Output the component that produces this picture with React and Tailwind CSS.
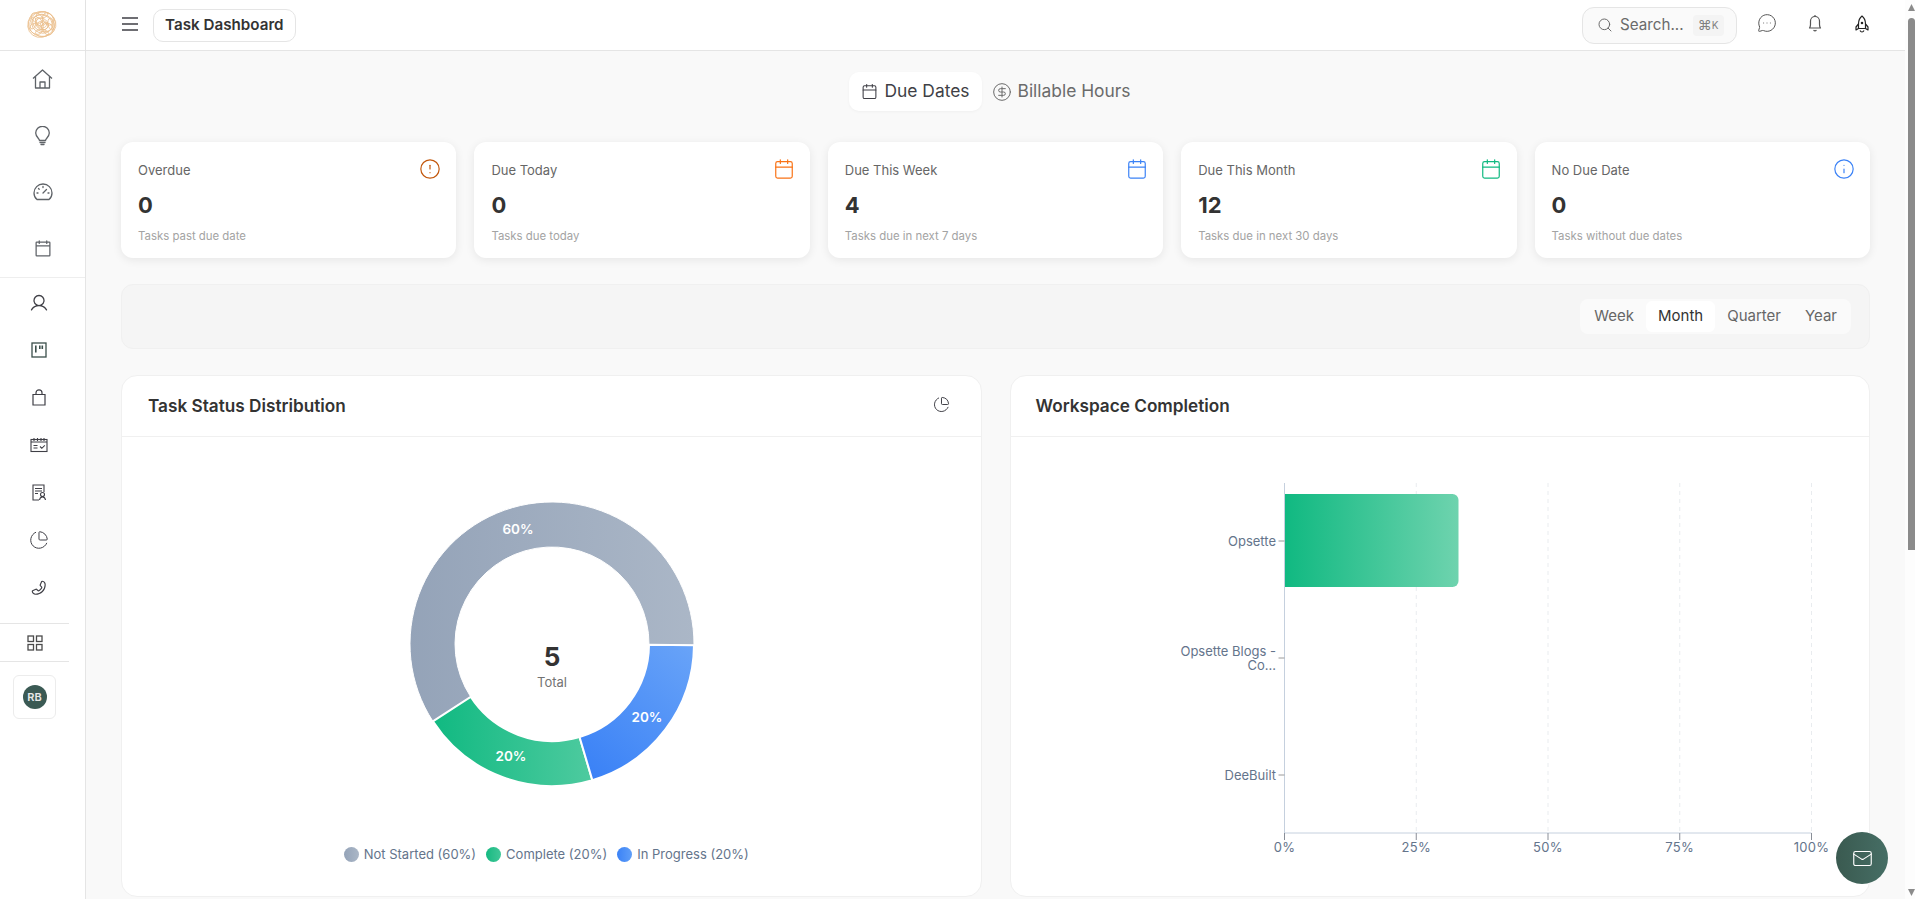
import { CircleAlert, Info, Calendar, CircleDollarSign, Search, MessageCircleMore, Mail, ChartPie } from "lucide-react";
import { PiCalendarBlank, PiUser, PiPhone } from "react-icons/pi";

const stats = [
  { title: "Overdue", value: "0", note: "Tasks past due date", Icon: CircleAlert, color: "text-[#c2570c]" },
  { title: "Due Today", value: "0", note: "Tasks due today", Icon: Calendar, color: "text-[#f97316]" },
  { title: "Due This Week", value: "4", note: "Tasks due in next 7 days", Icon: Calendar, color: "text-[#3b82f6]" },
  { title: "Due This Month", value: "12", note: "Tasks due in next 30 days", Icon: Calendar, color: "text-[#10b981]" },
  { title: "No Due Date", value: "0", note: "Tasks without due dates", Icon: Info, color: "text-[#3b82f6]" },
];

function Logo() {
  const rings = [
    [15, 15, 14, 12.5, 10], [14.5, 15.5, 12.5, 14, 60], [15, 15, 10.5, 9, 20], [16, 14, 8.5, 10.5, 110],
    [15, 15, 6.5, 5.5, 40], [15, 15.5, 3.5, 4.5, 80], [10, 9, 6.5, 4.5, 35], [21, 10, 5, 6.5, 150],
    [21, 20, 6, 5, 70], [9, 20, 5, 6.5, 120], [15, 24, 6.5, 3.5, 5], [15, 6, 6, 3, 170], [6, 14, 3, 6, 10],
    [24, 15, 3, 6, 170], [15, 15, 1.5, 2, 0], [12, 13, 4.5, 3, 60], [18, 17, 4, 3, 130],
  ];
  return (
    <svg width="30" height="30" viewBox="0 0 30 30" fill="none" stroke="#ebbf8c" strokeWidth="0.8" className="-mt-[2px] -ml-[1px]">
      {rings.map(([cx, cy, rx, ry, rot], i) => (
        <ellipse key={i} cx={cx} cy={cy} rx={rx} ry={ry} transform={`rotate(${rot} ${cx} ${cy})`} />
      ))}
    </svg>
  );
}

function Home() {
  return (
    <svg width="21" height="20" viewBox="0 0 21 20" fill="none" stroke="currentColor" strokeWidth="1.3" strokeLinejoin="round">
      <path d="M1 9.5L10.5 1l9.5 8.5" />
      <path d="M3.5 7.5V19h14V7.5" />
      <path d="M8 19v-6h5v6" />
    </svg>
  );
}

function Bulb() {
  return (
    <svg width="17" height="20" viewBox="0 0 17 20" fill="none" stroke="currentColor" strokeWidth="1.3" strokeLinecap="round">
      <path d="M5.5 14.5c0-2-3.8-3.6-3.8-7.4a6.8 6.8 0 0 1 13.6 0c0 3.8-3.8 5.4-3.8 7.4z" />
      <path d="M6 16.5h5M7 18.5h3" />
    </svg>
  );
}

function Gauge() {
  return (
    <svg width="20" height="18" viewBox="0 0 20 18" fill="none" stroke="currentColor" strokeWidth="1.3" strokeLinecap="round">
      <path d="M4 16.5C2 15 1 12.5 1 10a9 9 0 0 1 18 0c0 2.5-1 5-3 6.5z" />
      <path d="M10 10l3.5-3.5M10 3.5v1M4 10h1M15 10h1M5.5 5.5l.7.7" />
    </svg>
  );
}

function Kanban() {
  return (
    <svg width="16" height="16" viewBox="0 0 16 16" fill="none" stroke="#3b4f4b" strokeWidth="1.3">
      <rect x="1" y="1" width="14" height="14" />
      <path d="M4.8 3.5v7M8.8 3.5v3.5M11.3 3.5v3.5" strokeWidth="1.6" />
    </svg>
  );
}

function Bag() {
  return (
    <svg width="16" height="17" viewBox="0 0 16 17" fill="none" stroke="#3f3f46" strokeWidth="1.2">
      <path d="M2 5.5h12v10.5H2z" />
      <path d="M5 5.5V3.8a3 3 0 0 1 6 0v1.7" />
    </svg>
  );
}

function CalendarTasks() {
  return (
    <svg width="18" height="16" viewBox="0 0 18 16" fill="none" stroke="#3f3f46" strokeWidth="1.1">
      <rect x="1" y="2.5" width="16" height="12" />
      <path d="M1 5h16M4 1v3M7.5 1v3M11 1v3M14 1v3M3.5 8.5h4M3.5 11h4M10 9.5l1.8 1.8 3-3" />
    </svg>
  );
}

function Certificate() {
  return (
    <svg width="16" height="17" viewBox="0 0 16 17" fill="none" stroke="#3f3f46" strokeWidth="1.1">
      <path d="M8 16H2V1h11v7" />
      <path d="M4 4.5h7M4 7h7M4 9.5h3" />
      <circle cx="11.5" cy="10.5" r="2" />
      <path d="M8.5 16c.3-2 1.5-3 3-3s2.7 1 3 3" />
    </svg>
  );
}

function Squares() {
  return (
    <svg width="16" height="16" viewBox="0 0 16 16" fill="none" stroke="#4b4b4b" strokeWidth="1.3">
      <rect x="1" y="1" width="5.5" height="5.5" />
      <rect x="9.5" y="1" width="5.5" height="5.5" />
      <rect x="1" y="9.5" width="5.5" height="5.5" />
      <rect x="9.5" y="9.5" width="5.5" height="5.5" />
    </svg>
  );
}

function Bell() {
  return (
    <svg width="20" height="20" viewBox="0 0 20 20" fill="none" stroke="currentColor" strokeWidth="1.2" strokeLinejoin="round">
      <path d="M4.5 15c.7-1 1-2 1-3.5V8a4.5 4.5 0 0 1 9 0v3.5c0 1.5.3 2.5 1 3.5z" />
      <path d="M8.5 17.3c.7.6 2.3.6 3 0M10 2v1.5" />
    </svg>
  );
}

function Rocket() {
  return (
    <svg width="20" height="20" viewBox="0 0 20 20" fill="none" stroke="currentColor" strokeWidth="1.2" strokeLinejoin="round">
      <path d="M10 2C7.5 4 6.5 7 6.5 10v4.5h7V10c0-3-1-6-3.5-8z" />
      <path d="M6.5 10l-2.5 3v3l2.5-1.5M13.5 10l2.5 3v3l-2.5-1.5" />
      <path d="M8 16.5c.5 1 1.2 1.5 2 1.5s1.5-.5 2-1.5" />
      <circle cx="10" cy="9" r="0.7" fill="currentColor" />
    </svg>
  );
}

function Sidebar() {
  const top = [
    <Home key="h" />,
    <Bulb key="l" />,
    <Gauge key="g" />,
    <PiCalendarBlank key="c" size={20} />,
  ];
  const mid = [
    <PiUser key="u" size={20} />,
    <Kanban key="k" />,
    <Bag key="b" />,
    <CalendarTasks key="ct" />,
    <Certificate key="ce" />,
    <ChartPie key="p" size={20} strokeWidth={1.2} />,
    <PiPhone key="ph" size={18} className="-scale-x-100" />,
  ];
  return (
    <aside className="w-[86px] shrink-0 flex flex-col border-r border-[#e5e5e5] bg-white text-[#5f6368]">
      <div className="h-[51px] shrink-0 flex items-center justify-center border-b border-[#e5e5e5]">
        <Logo />
      </div>
      <div className="flex flex-col border-b border-[#eeeeee] h-[227px] shrink-0">
        {top.map((icon, i) => (
          <div key={i} className="h-[56.5px] shrink-0 flex items-center justify-center">{icon}</div>
        ))}
      </div>
      <div className="w-[78px] flex flex-col shrink-0 h-[345px] pt-[1px] text-[#3f3f46]">
        {mid.map((icon, i) => (
          <div key={i} className="h-[47.5px] shrink-0 flex items-center justify-center">{icon}</div>
        ))}
      </div>
      <div className="w-[69px] h-[39px] shrink-0 flex items-center justify-center border-y border-[#e5e5e5]">
        <Squares />
      </div>
      <div className="w-[69px] flex justify-center pt-[13px]">
        <div className="w-[43px] h-[44px] flex items-center justify-center rounded-md border border-[#ececec]">
          <div className="w-[24px] h-[24px] rounded-full bg-[#3b5a54] flex items-center justify-center text-[11px] font-semibold text-[#e8e8e8]">RB</div>
        </div>
      </div>
    </aside>
  );
}

function Header() {
  return (
    <header className="h-[51px] shrink-0 flex items-center justify-between bg-white border-b border-[#e5e5e5] shadow-[0_1px_2px_rgba(0,0,0,0.04)] pl-[36px] pr-[33px]">
      <div className="flex items-center gap-[15px]">
        <svg width="16" height="14" viewBox="0 0 16 14" fill="none" stroke="#3f3f46" strokeWidth="1.4" className="-mt-[3px]">
          <path d="M0 1h16M0 7h16M0 13h16" />
        </svg>
        <div className="h-[33px] px-[11px] flex items-center rounded-[10px] border border-[#e5e5e5] text-[15.2px] font-semibold text-[#333333] whitespace-nowrap">
          Task Dashboard
        </div>
      </div>
      <div className="flex items-center">
        <div className="w-[155px] h-[37px] flex items-center rounded-[12px] border border-[#e5e5e5] bg-[#fafafa] pl-[14px] text-[#6b6b6b]">
          <Search size={16} strokeWidth={1.5} />
          <span className="ml-[7px] text-[15.2px]">Search...</span>
          <span className="ml-[9px] w-[31px] h-[21px] flex items-center justify-center rounded bg-[#f4f4f4] text-[#808080]">
            <span className="text-[14px] leading-none">⌘</span>
            <span className="text-[10px] leading-none">K</span>
          </span>
        </div>
        <div className="ml-[20px] -mt-[4px] w-[20px] flex justify-center text-[#555555]"><MessageCircleMore size={20} strokeWidth={1.2} /></div>
        <div className="ml-[28px] -mt-[4px] w-[20px] flex justify-center text-[#555555]"><Bell /></div>
        <div className="ml-[27px] -mt-[2px] w-[20px] flex justify-center text-[#222222]"><Rocket /></div>
      </div>
    </header>
  );
}

function StatCard({ title, value, note, Icon, color }) {
  return (
    <div className="h-[116px] rounded-xl bg-white pl-[17px] pr-[15px] pt-[16px] shadow-[0_2px_10px_rgba(0,0,0,0.08)]">
      <div className="flex items-start justify-between">
        <span className="text-[13px] leading-[24px] text-[#666666]">{title}</span>
        <Icon size={22} strokeWidth={1.3} className={color} />
      </div>
      <div className="mt-[9px] text-[22px] leading-[28px] font-bold text-[#333333]">{value}</div>
      <div className="mt-[9px] text-[11.4px] leading-[16px] text-[#a3a3a3]">{note}</div>
    </div>
  );
}

function arcPath(a0, a1) {
  const cx = 145, cy = 145, R = 142, r = 97;
  const pt = (rad, deg) => {
    const t = (deg * Math.PI) / 180;
    return `${(cx + rad * Math.cos(t)).toFixed(2)} ${(cy + rad * Math.sin(t)).toFixed(2)}`;
  };
  const large = a1 - a0 > 180 ? 1 : 0;
  return `M${pt(R, a0)} A${R} ${R} 0 ${large} 1 ${pt(R, a1)} L${pt(r, a1)} A${r} ${r} 0 ${large} 0 ${pt(r, a0)} Z`;
}

function Donut() {
  return (
    <svg width="290" height="290" viewBox="0 0 290 290" className="ml-[1px]">
      <defs>
        <linearGradient id="grayArc" gradientUnits="userSpaceOnUse" x1="0" y1="0" x2="290" y2="0">
          <stop offset="0" stopColor="#94a3b8" />
          <stop offset="1" stopColor="#abb7c7" />
        </linearGradient>
        <linearGradient id="greenArc" gradientUnits="userSpaceOnUse" x1="25" y1="0" x2="190" y2="0">
          <stop offset="0" stopColor="#10b981" />
          <stop offset="1" stopColor="#50cba0" />
        </linearGradient>
        <linearGradient id="blueArc" gradientUnits="userSpaceOnUse" x1="180" y1="270" x2="287" y2="150">
          <stop offset="0" stopColor="#3b82f6" />
          <stop offset="1" stopColor="#68a3f8" />
        </linearGradient>
      </defs>
      <path d={arcPath(147, 360.5)} fill="url(#grayArc)" stroke="#ffffff" strokeWidth="1" />
      <path d={arcPath(73.5, 147)} fill="url(#greenArc)" stroke="#ffffff" strokeWidth="2" />
      <path d={arcPath(0.5, 73.5)} fill="url(#blueArc)" stroke="#ffffff" strokeWidth="2" />
      <g fill="#ffffff" fontSize="13.5" fontWeight="600" textAnchor="middle" dominantBaseline="central">
        <text x="111" y="30">60%</text>
        <text x="240" y="218">20%</text>
        <text x="104" y="257">20%</text>
      </g>
      <text x="145" y="157" fill="#333333" fontSize="26" fontWeight="700" textAnchor="middle" dominantBaseline="central">5</text>
      <text x="145" y="183" fill="#737373" fontSize="13" textAnchor="middle" dominantBaseline="central">Total</text>
    </svg>
  );
}

function LegendItem({ label, dot }) {
  return (
    <div className="flex items-center gap-[5px]">
      <span className={`w-[15px] h-[15px] rounded-full ${dot}`} />
      <span className="text-[13px] text-[#64748b]">{label}</span>
    </div>
  );
}

function StatusCard() {
  return (
    <section className="h-[522px] rounded-2xl border border-[#f0f0f0] bg-white">
      <div className="h-[61px] flex items-center justify-between border-b border-[#f0f0f0] pl-[26px] pr-[31px]">
        <h2 className="text-[17.2px] font-semibold text-[#333333]">Task Status Distribution</h2>
        <ChartPie size={17} strokeWidth={1.4} className="text-[#3f3f46] -mt-[3px]" />
      </div>
      <div className="flex flex-col items-center pt-[62px]">
        <Donut />
        <div className="mt-[56px] mr-[10px] flex items-center gap-[10px]">
          <LegendItem label="Not Started (60%)" dot="bg-gradient-to-r from-[#94a3b8] to-[#abb7c7]" />
          <LegendItem label="Complete (20%)" dot="bg-gradient-to-r from-[#10b981] to-[#3fc798]" />
          <LegendItem label="In Progress (20%)" dot="bg-gradient-to-r from-[#3b82f6] to-[#5f9ef8]" />
        </div>
      </div>
    </section>
  );
}

function CompletionChart() {
  // coordinates are relative to the chart body, which starts at x=1010, y=437
  const axisX = 273.5;
  const axisY = 396;
  const grid = [0, 131.75, 263.5, 395.25, 527];
  const pct = ["0%", "25%", "50%", "75%", "100%"];
  return (
    <svg width="858" height="459" viewBox="0 0 858 459">
      <defs>
        <linearGradient id="barFill" x1="0" y1="0" x2="1" y2="0">
          <stop offset="0" stopColor="#10b981" />
          <stop offset="1" stopColor="#6ed3ae" />
        </linearGradient>
      </defs>
      {grid.slice(1).map((d) => (
        <line key={d} x1={axisX + d} x2={axisX + d} y1="46" y2={axisY} stroke="#e9ecef" strokeDasharray="4 4" />
      ))}
      <path d={`M${axisX} 57h168a6 6 0 0 1 6 6v81a6 6 0 0 1 -6 6h-168z`} fill="url(#barFill)" />
      <line x1={axisX} x2={axisX} y1="46" y2={axisY} stroke="#c5d0de" />
      <line x1={axisX} x2={axisX + 527} y1={axisY} y2={axisY} stroke="#c5d0de" />
      {grid.map((d) => (
        <line key={d} x1={axisX + d} x2={axisX + d} y1={axisY} y2={axisY + 7} stroke="#8a8f98" />
      ))}
      {[104, 221, 338].map((y) => (
        <line key={y} x1={axisX - 6} x2={axisX} y1={y} y2={y} stroke="#9a9a9a" />
      ))}
      <g fill="#64748b" fontSize="13" textAnchor="end" dominantBaseline="central">
        <text x="265" y="104">Opsette</text>
        <text x="265" y="214">Opsette Blogs -</text>
        <text x="265" y="228">Co...</text>
        <text x="265" y="338">DeeBuilt</text>
      </g>
      <g fill="#64748b" fontSize="13" letterSpacing="0.3" textAnchor="middle" dominantBaseline="central">
        {grid.map((d, i) => (
          <text key={d} x={axisX + d} y={axisY + 14}>{pct[i]}</text>
        ))}
      </g>
    </svg>
  );
}

function CompletionCard() {
  return (
    <section className="h-[522px] rounded-2xl border border-[#f0f0f0] bg-white">
      <div className="h-[61px] flex items-center border-b border-[#f0f0f0] pl-[25px]">
        <h2 className="text-[17.2px] font-semibold text-[#333333]">Workspace Completion</h2>
      </div>
      <CompletionChart />
    </section>
  );
}

function Scrollbar() {
  return (
    <div className="w-[10px] shrink-0 flex flex-col items-end bg-[#fdfdfd] pt-[4px] pb-[3px]">
      <svg width="7" height="7" viewBox="0 0 7 7" fill="#8b8b8b"><path d="M3.5 0L7 7H0z" /></svg>
      <div className="mt-[7px] w-[7px] h-[532px] rounded-t-sm bg-[#8b8b8b]" />
      <div className="flex-1" />
      <svg width="7" height="7" viewBox="0 0 7 7" fill="#8b8b8b"><path d="M0 0h7L3.5 7z" /></svg>
    </div>
  );
}

export default function App() {
  return (
    <div className="relative h-[899px] w-full flex overflow-hidden bg-white font-['Inter',sans-serif]">
      <Sidebar />
      <div className="flex-1 min-w-0 flex flex-col">
        <Header />
        <main className="flex-1 min-h-0 overflow-hidden bg-[#f9f9f9] px-[35px] pt-[21px]">
          <div className="flex justify-center gap-[4px] pr-[5px]">
            <div className="h-[39px] px-[12px] flex items-center gap-[6px] rounded-[10px] bg-white text-[#3f3f46] shadow-[0_1px_3px_rgba(0,0,0,0.04)]">
              <Calendar size={17} strokeWidth={1.5} />
              <span className="text-[17.4px]">Due Dates</span>
            </div>
            <div className="h-[39px] px-[6px] flex items-center gap-[6px] text-[#6b6b6b]">
              <CircleDollarSign size={20} strokeWidth={1.2} />
              <span className="text-[17.4px]">Billable Hours</span>
            </div>
          </div>
          <div className="mt-[31px] grid grid-cols-5 gap-[18px]">
            {stats.map((s) => (
              <StatCard key={s.title} {...s} />
            ))}
          </div>
          <div className="mt-[26px] h-[65px] flex items-center justify-end rounded-xl border border-[#f0f0f0] bg-[#f5f5f5] pr-[18px]">
            <div className="h-[35px] flex items-center rounded-lg bg-[#fafafa] px-[2px] text-[15px] text-[#666666]">
              <span className="px-[12px]">Week</span>
              <span className="h-[31px] px-[12px] flex items-center rounded-md bg-white text-[#333333]">Month</span>
              <span className="px-[12px]">Quarter</span>
              <span className="px-[12px]">Year</span>
            </div>
          </div>
          <div className="mt-[26px] grid grid-cols-2 gap-[28px]">
            <StatusCard />
            <CompletionCard />
          </div>
        </main>
      </div>
      <Scrollbar />
      <button className="absolute left-[1836px] top-[832px] w-[52px] h-[52px] rounded-full flex items-center justify-center text-white bg-gradient-to-r from-[#3a5a50] to-[#466e65]">
        <Mail size={21} strokeWidth={1.3} />
      </button>
    </div>
  );
}
